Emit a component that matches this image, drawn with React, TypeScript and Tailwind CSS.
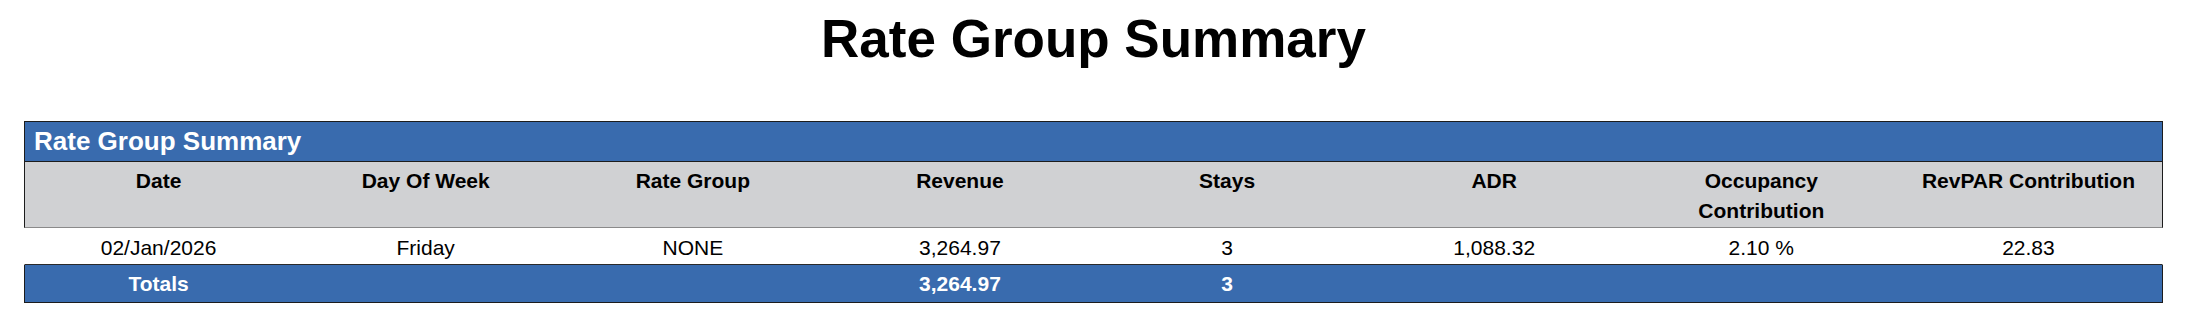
import React from "react";

const columns = [
  "Date",
  "Day Of Week",
  "Rate Group",
  "Revenue",
  "Stays",
  "ADR",
  "Occupancy Contribution",
  "RevPAR Contribution",
];

const row = ["02/Jan/2026", "Friday", "NONE", "3,264.97", "3", "1,088.32", "2.10 %", "22.83"];

const totals = ["Totals", "", "", "3,264.97", "3", "", "", ""];

export default function App() {
  return (
    <div className="w-[2200px] h-[332px] bg-white text-black font-['Liberation_Sans',Arial,sans-serif]">
      <div className="ml-[24px] w-[2139px]">
        <h1 className="pt-[9px] h-[69px] text-center text-[53px] leading-[60px] font-bold">Rate Group Summary</h1>

        <div className="mt-[52px]">
          {/* section band */}
          <div className="h-[41px] border border-[#1c1c1c] bg-[#396bae] pl-[9px] text-[26px] leading-[39px] font-bold text-white">
            Rate Group Summary
          </div>

          {/* column headers */}
          <div className="grid grid-cols-8 h-[66px] border-x border-b border-x-[#1c1c1c] border-b-[#8a8a8a] bg-[#d0d1d3]">
            {columns.map((c) => (
              <div key={c} className="pt-[4px] px-2 text-center text-[21px] leading-[30px] font-bold">
                {c === "Occupancy Contribution" ? (
                  <>
                    Occupancy
                    <br />
                    Contribution
                  </>
                ) : (
                  c
                )}
              </div>
            ))}
          </div>

          {/* data row */}
          <div className="grid grid-cols-8 h-[37px] border-x border-b border-x-transparent border-b-[#2a2a2a]">
            {row.map((v, i) => (
              <div key={i} className="pt-[4px] text-center text-[21px] leading-[32px]">
                {v}
              </div>
            ))}
          </div>

          {/* totals */}
          <div className="grid grid-cols-8 h-[38px] border-x border-b border-[#1c1c1c] bg-[#396bae]">
            {totals.map((v, i) => (
              <div key={i} className="text-center text-[21px] leading-[37px] font-bold text-white">
                {v}
              </div>
            ))}
          </div>
        </div>
      </div>
    </div>
  );
}
